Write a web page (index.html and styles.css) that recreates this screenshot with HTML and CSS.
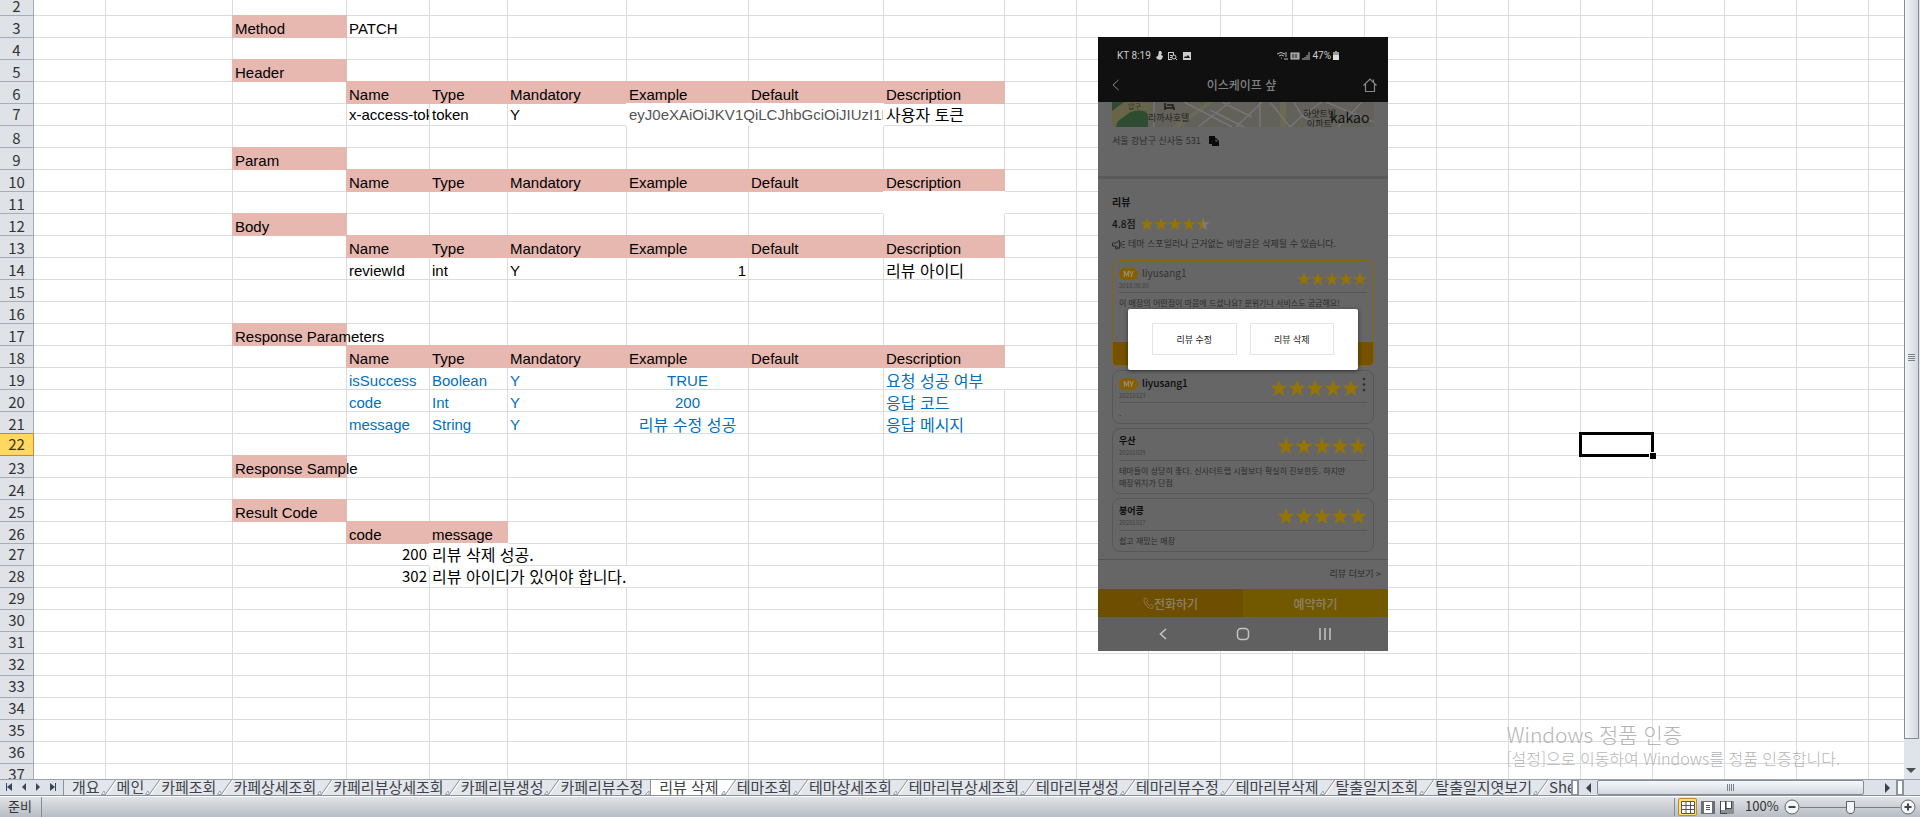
FILE: index.html
```html
<!DOCTYPE html>
<html lang="ko">

<head>
  <meta charset="utf-8">
  <title>리뷰 삭제</title>
  <link rel="stylesheet" href="styles.css">
</head>

<body>
  <!-- shared star shape -->
  <svg class="defs" aria-hidden="true">
    <symbol id="star" viewBox="0 0 20 20">
      <path d="M10 0.5l2.4 7h7.3l-5.9 4.4 2.2 7.2-6-4.4-6 4.4 2.2-7.2L0.3 7.5h7.3z"/>
    </symbol>
  </svg>

  <main id="main">
    <div id="sheet">
      <table id="grid"></table>

      <div id="phone">
        <div class="statusbar">
          <span>KT 8:19</span>
          <svg width="36" height="10" viewBox="0 0 36 10" fill="#ccc">
            <path d="M3 0h2l1 2-1 2 2 1-1 3-2 1-3-1-1-2 2-1zM12 1h6v3h-1v-2h-4v6h3v1h-4zM14 4h2v1h-2zM14 6h2v1h-2z"/>
            <circle cx="18" cy="6" r="2" fill="none" stroke="#ccc"/>
            <path d="M19 7l2 2" stroke="#ccc"/>
            <path d="M27 1h8v8h-8zM28 7h6l-2-3-2 2-1-1z" fill-rule="evenodd"/>
          </svg>
          <span class="right">
            <svg width="33" height="10" viewBox="0 0 33 10" fill="none" stroke="#bbb">
              <path d="M0 3q4-3 8 0M2 5q2-2 5 0M4 7h1M9 1v5M7 8h4"/>
              <rect x="14" y="2" width="8" height="6" fill="#999"/>
              <path d="M16 3v4M19 3v4" stroke="#222"/>
              <path d="M26 9V7M28 9V6M30 9V4M32 9V1"/>
            </svg>
            47%
            <svg width="6" height="9" viewBox="0 0 6 9"><path d="M2 0h2v1h2v8H0V1h2z" fill="#999"/><path d="M0 4h6v5H0z" fill="#ddd"/></svg>
          </span>
        </div>
        <div class="appbar">
          <svg width="8" height="12" viewBox="0 0 8 12" fill="none" stroke="#888"><path d="M6.500 1L1 6l5.500 5"/></svg>
          <b>이스케이프 샾</b>
          <svg width="14" height="14" viewBox="0 0 14 14" fill="none" stroke="#888" stroke-width="1.200"><path d="M.5 7.500L7 1l6.500 6.500M2.500 6v7.500h9V6M10.500 4V1.500"/></svg>
        </div>

        <svg class="map" viewBox="0 0 262 25" preserveAspectRatio="none">
          <rect width="262" height="25" fill="#62615a"/>
          <path d="M0 0h38v12L16 25H0z" fill="#66654a"/>
          <path d="M0 0h12L0 9zM4 25Q6 13 22 9q12-2 14 4v12z" fill="#2f4b31"/>
          <path d="M0 14L24 0h8L2 22z" fill="#6a6547"/>
          <path d="M168 0h6v25h-6zM60 25L96 0h5L68 25z" fill="#6c6a52"/>
          <path d="M42 0v25M72 0l48 25M86 25l32-25M98 8l34 17M110 0l30 15M124 25l26-25M148 0v25M158 0l20 25M182 0l8 14 20-14M178 25l12-11 20 11M214 0l48 20M226 25l24-25" fill="none" stroke="#75757a" stroke-width="1.500"/>
          <path d="M53 1v7M53 6h9v2M55 3h6v3" stroke="#1c1c1c" fill="none" stroke-width="1.500"/>
          <text x="16" y="7" class="map-road">압구</text>
          <text x="36" y="19" class="map-label">라까사호텔</text>
          <text x="191" y="15" class="map-label">하얏트빌</text>
          <text x="195" y="25" class="map-label">아파트</text>
          <text x="218" y="21" class="map-logo">kakao</text>
        </svg>
        <div class="address">
          서울 강남구 신사동 531
          <svg width="10" height="10" viewBox="0 0 10 10"><path d="M0 0h6v2H3v6H0zM3 2h4l3 3v5H3zM6.500 3v2.500H9z" fill="#0a0a0a" fill-rule="evenodd"/></svg>
        </div>

        <section class="reviews">
          <h2>리뷰</h2>
          <div class="score">
            4.8점
            <span class="stars mid">
              <svg><use href="#star"/></svg><svg><use href="#star"/></svg><svg><use href="#star"/></svg><svg><use href="#star"/></svg><svg viewBox="0 0 20 20"><path d="M10 .5l2.400 7h7.300l-5.900 4.400 2.200 7.200-6-4.400z" fill="#7c7c7c"/><path d="M10 .5L7.600 7.500H.3l5.900 4.400L4 19.100l6-4.400z"/></svg>
            </span>
          </div>
          <div class="notice">
            <svg width="13" height="11" viewBox="0 0 13 11" fill="none" stroke="#2c2c2c"><path d="M.5 4v3h3l4 2.500v-8L3.500 4zM3 7l1 3h1.500V8M9 3v5M10.500 2.500h2M10.500 5.500h2M10.500 8.500h2"/></svg>
            테마 스포일러나 근거없는 비방글은 삭제될 수 있습니다.
          </div>

          <article class="card mine">
            <header>
              <div><span class="badge">MY</span><span class="name thin">liyusang1</span><time>2018.00.00</time></div>
              <span class="stars small"><svg><use href="#star"/></svg><svg><use href="#star"/></svg><svg><use href="#star"/></svg><svg><use href="#star"/></svg><svg><use href="#star"/></svg></span>
            </header>
            <p>이 매장의 어떤점이 마음에 드셨나요? 분위기나 서비스도 궁금해요!</p>
            <div class="write"></div>
          </article>

          <article class="card">
            <header>
              <div><span class="badge">MY</span><span class="name">liyusang1</span><time>20210123</time></div>
              <span class="stars"><svg><use href="#star"/></svg><svg><use href="#star"/></svg><svg><use href="#star"/></svg><svg><use href="#star"/></svg><svg><use href="#star"/></svg></span>
              <svg class="more" width="4" height="15" viewBox="0 0 4 15" fill="#303030"><circle cx="2" cy="2" r="1.300"/><circle cx="2" cy="7.500" r="1.300"/><circle cx="2" cy="13" r="1.300"/></svg>
            </header>
            <p>.</p>
          </article>

          <article class="card">
            <header>
              <div><span class="name">우산</span><time>20201029</time></div>
              <span class="stars"><svg><use href="#star"/></svg><svg><use href="#star"/></svg><svg><use href="#star"/></svg><svg><use href="#star"/></svg><svg><use href="#star"/></svg></span>
            </header>
            <p>테마들이 상당히 좋다. 신사더트랩 시절보다 확실히 진보한듯. 하지만<br>매장위치가 단점</p>
          </article>

          <article class="card">
            <header>
              <div><span class="name">붕어콩</span><time>20201027</time></div>
              <span class="stars"><svg><use href="#star"/></svg><svg><use href="#star"/></svg><svg><use href="#star"/></svg><svg><use href="#star"/></svg><svg><use href="#star"/></svg></span>
            </header>
            <p>쉽고 재밌는 매장</p>
          </article>
        </section>

        <a class="more-link" href="#">리뷰 더보기 &gt;</a>
        <div class="actions">
          <button type="button"><svg width="11" height="12" viewBox="0 0 11 12" fill="none" stroke="#8c7a50"><path d="M2.500.8L1 2.200Q.5 6 3.500 9t6 2.300l1-1.800-2.500-2-1.500 1Q4 7 3.500 5l1.200-1.200z"/></svg>전화하기</button>
          <button type="button">예약하기</button>
        </div>
        <div class="navbar">
          <svg width="8" height="12" viewBox="0 0 8 12"><path d="M7 1L1.500 6 7 11"/></svg>
          <svg width="14" height="14" viewBox="0 0 14 14"><rect x="1.500" y="1.500" width="11" height="11" rx="3.500"/></svg>
          <svg width="12" height="12" viewBox="0 0 12 12"><path d="M1 0v12M6 0v12M11 0v12"/></svg>
        </div>

        <div class="dialog">
          <button type="button">리뷰 수정</button>
          <button type="button">리뷰 삭제</button>
        </div>
      </div>

      <div id="watermark">
        <div class="big">Windows 정품 인증</div>
        <div>[설정]으로 이동하여 Windows를 정품 인증합니다.</div>
      </div>
    </div>

    <div id="vscroll">
      <div class="thumb"><i></i></div>
      <svg width="14" height="40" viewBox="0 0 14 40"><path d="M2 29h10l-5 5z" fill="#4a4f57"/></svg>
    </div>
  </main>

  <div id="tabbar">
    <svg class="tabnav" width="63" height="15" viewBox="0 0 63 15" fill="#3c4654">
      <path d="M6 3h1v8H6zM12 3v8L7 7zM26 3v8l-4-4zM36 3v8l4-4zM50 3v8l5-4zM55 3h1v8h-1z"/>
    </svg>
    <nav id="tabs"></nav>
    <div class="split"></div>
    <div id="hscroll">
      <svg width="18" height="15" viewBox="0 0 18 15"><path d="M12 3v10L7 8z" fill="#3c4148"/></svg>
      <div class="thumb"><i></i></div>
      <svg width="32" height="15" viewBox="0 0 32 15"><path d="M21 3v10l5-5z" fill="#3c4148"/></svg>
    </div>
    <div class="split last"></div>
  </div>

  <footer id="status">
    <span class="ready">준비</span>
    <div class="views">
      <button type="button" class="on" aria-label="기본">
        <svg width="14" height="13" viewBox="0 0 14 13"><path d="M.5.5h13v12H.5z" fill="#fff" stroke="#555"/><path d="M0 4.500h14M0 8.500h14M5 0v13M9.500 0v13" stroke="#555"/></svg>
      </button>
      <button type="button" aria-label="페이지 레이아웃">
        <svg width="14" height="13" viewBox="0 0 14 13"><path d="M0 0h14v13H0z" fill="#6b6e73"/><path d="M3 1h8v11H3z" fill="#fff"/><path d="M5 4.500h4M5 6.500h4M5 8.500h4" stroke="#555"/></svg>
      </button>
      <button type="button" aria-label="페이지 나누기 미리 보기">
        <svg width="14" height="13" viewBox="0 0 14 13"><path d="M0 0h14v13H0z" fill="#8b8e93"/><path d="M1 1h4v8H1zM7 1h4v6H7z" fill="#fff"/><path d="M.5 0v12.500H7M5.500 0v9M11.500 0v7.500H6" stroke="#444" fill="none"/></svg>
      </button>
    </div>
    <label for="zoom">100%</label>
    <button type="button" class="round" aria-label="축소"><svg width="16" height="16" viewBox="0 0 16 16"><circle cx="8" cy="8" r="7" fill="#f4f5f7" stroke="#5d636b"/><path d="M4.500 8h7" stroke="#444" stroke-width="2"/></svg></button>
    <input type="range" id="zoom" min="0" max="100" value="50">
    <button type="button" class="round" aria-label="확대"><svg width="16" height="16" viewBox="0 0 16 16"><circle cx="8" cy="8" r="7" fill="#f4f5f7" stroke="#5d636b"/><path d="M4.500 8h7M8 4.500v7" stroke="#444" stroke-width="2"/></svg></button>
  </footer>

  <script>
    var FIRST_ROW = 2;
    var LAST_ROW = 60;
    var COLS = 'ABCDEFGHIJKLMNOPQRSTUVWXYZ';
    var SELECTED = 'R22';

    // rows whose cells are centred instead of sitting on the bottom line
    var midRows = [7, 22];

    // ref: [text, classes, colspan]
    var cells = {
      C3: ['Method', 'fill'],
      D3: ['PATCH'],
      C5: ['Header', 'fill'],
      D7: ['x-access-token', 'clip'],
      E7: ['token'],
      F7: ['Y'],
      G7: ['eyJ0eXAiOiJKV1QiLCJhbGciOiJIUzI1NiJ9', 'blank clip gray', 2],
      I7: ['사용자 토큰', 'ko'],
      C9: ['Param', 'fill'],
      I11: ['', 'blank'],
      C12: ['Body', 'fill'],
      D14: ['reviewId'],
      E14: ['int'],
      F14: ['Y'],
      G14: ['1', 'num'],
      I14: ['리뷰 아이디', 'ko'],
      C17: ['Response Parameters', 'fill'],
      D19: ['isSuccess', 'blue'],
      E19: ['Boolean', 'blue'],
      F19: ['Y', 'blue'],
      G19: ['TRUE', 'blue center'],
      I19: ['요청 성공 여부', 'blue ko', 2],
      D20: ['code', 'blue'],
      E20: ['Int', 'blue'],
      F20: ['Y', 'blue'],
      G20: ['200', 'blue center'],
      I20: ['응답 코드', 'blue ko'],
      D21: ['message', 'blue'],
      E21: ['String', 'blue'],
      F21: ['Y', 'blue'],
      G21: ['리뷰 수정 성공', 'blue center ko'],
      I21: ['응답 메시지', 'blue ko'],
      C23: ['Response Sample', 'fill'],
      C25: ['Result Code', 'fill'],
      D26: ['code', 'fill'],
      E26: ['message', 'fill'],
      D27: ['200', 'num ui'],
      E27: ['리뷰 삭제 성공.', 'blank ko'],
      D28: ['302', 'num ui'],
      E28: ['리뷰 아이디가 있어야 합니다.', 'ko', 3]
    };

    var heads = { D: 'Name', E: 'Type', F: 'Mandatory', G: 'Example', H: 'Default', I: 'Description' };
    [6, 10, 13, 18].forEach(function(row) {
      for (var col in heads) {
        cells[col + row] = [heads[col], 'fill'];
      }
    });

    var drawGrid = function() {
      var html = '<colgroup><col class="head">';
      for (var i = 0; i < COLS.length; i++) {
        html += '<col class="col-' + COLS[i].toLowerCase() + '">';
      }
      html += '</colgroup>';

      for (var r = FIRST_ROW; r <= LAST_ROW; r++) {
        var mid = midRows.indexOf(r) >= 0 || r > 26;
        html += '<tr' + (mid ? ' class="mid"' : '') + '><th' + (r === 22 ? ' class="current"' : '') + '>' + r + '</th>';
        for (var c = 0; c < COLS.length; c++) {
          var ref = COLS[c] + r;
          var cell = cells[ref] || ['', ''];
          var span = cell[2] || 1;
          var cls = (cell[1] || '') + (ref === SELECTED ? ' selected' : '');
          html += '<td' + (cls ? ' class="' + cls + '"' : '') + (span > 1 ? ' colspan="' + span + '"' : '') + '>' + cell[0] + '</td>';
          c += span - 1;
        }
        html += '</tr>';
      }

      document.getElementById('grid').innerHTML = html;
    };

    var tabs = ['개요', '메인', '카페조회', '카페상세조회', '카페리뷰상세조회', '카페리뷰생성', '카페리뷰수정', '리뷰 삭제', '테마조회', '테마상세조회', '테마리뷰상세조회', '테마리뷰생성', '테마리뷰수정', '테마리뷰삭제', '탈출일지조회', '탈출일지엿보기', 'Sheet1'];
    var activeTab = 7;

    var drawTabs = function() {
      var html = '';
      for (var i = 0; i < tabs.length; i++) {
        html += '<a href="#"' + (i === activeTab ? ' class="active"' : '') + '>' + tabs[i] + '</a>';
        if (i === activeTab - 1) {
          html += '<svg class="edge" width="8" height="15" viewBox="0 0 8 15"><path d="M2 15l4-4v4z" fill="#fff" stroke="#9aa0a8"/><path d="M7.500 0v15" stroke="#8b929c"/></svg>';
        } else if (i < tabs.length - 1) {
          html += '<svg class="edge" width="17" height="15" viewBox="0 0 17 15">' +
            (i === activeTab ? '<path d="M0 0h15L5 15H0z" fill="#fff"/>' : '') +
            '<path d="M5 15L15.500 0" stroke="#8b929c"/><path d="M6.500 15L17 0" stroke="#fff"/><path d="M1.500 14.500L4 11l1.500 3.500z" fill="#fff" stroke="#9aa0a8"/></svg>';
        }
      }
      document.getElementById('tabs').innerHTML = html;
    };

    drawGrid();
    drawTabs();
  </script>
</body>

</html>
```
FILE: styles.css
```css
* { box-sizing: border-box; }

body {
  margin: 0;
  height: 100vh;
  display: flex;
  flex-direction: column;
  overflow: hidden;
  background-color: white;
  color: black;
  font-family: "Noto Sans CJK KR", sans-serif;
}

button {
  margin: 0;
  padding: 0;
  border: 0;
  background: none;
  font-family: inherit;
}

svg { flex: none; }

.defs {
  position: absolute;
  width: 0;
  height: 0;
}

#main {
  flex: 1;
  min-height: 0;
  display: flex;
}

#sheet {
  flex: 1;
  min-width: 0;
  position: relative;
  overflow: hidden;
}

/* grid */

#grid {
  width: 2229px;
  table-layout: fixed;
  border-spacing: 0;
  font-family: "Liberation Sans", "Noto Sans CJK KR", sans-serif;
  font-size: 15px;
  line-height: 16px;
  margin-top: -6px;
}

#grid col { width: 72px; }

#grid .head { width: 34px; }

#grid .col-b { width: 127px; }

#grid .col-c { width: 114px; }

#grid .col-d { width: 83px; }

#grid .col-e { width: 78px; }

#grid .col-f { width: 119px; }

#grid .col-g { width: 122px; }

#grid .col-h { width: 135px; }

#grid .col-i { width: 121px; }

td, th {
  height: 22px;
  padding: 0 2px;
  border-right: 1px solid #dadcdd;
  border-bottom: 1px solid #dadcdd;
  vertical-align: bottom;
  white-space: nowrap;
}

th {
  padding: 0;
  background-color: #dfe3e8;
  border-color: #a4adb8;
  color: #333;
  font-family: "Noto Sans CJK KR", sans-serif;
  font-weight: normal;
  line-height: 18px;
  text-align: center;
}

.mid td, .mid th { vertical-align: middle; }

.mid th, .mid .ko, .mid .ui { padding-bottom: 2px; }

.current {
  background-color: #ffd860;
  border-color: #c58a2c;
  box-shadow: 0 -1px #c58a2c;
}

.fill {
  background-color: #e6b8b0;
  border-color: #e6b8b0;
  box-shadow: -1px 0 #e6b8b0, 0 -1px #e6b8b0, -1px -1px #e6b8b0;
}

.blank {
  background-color: white;
  border-color: white;
  box-shadow: -1px 0 white, 0 -1px white, -1px -1px white;
}

.clip { overflow: hidden; }

.gray { color: #555; }

.blue { color: #0070c0; }

.center { text-align: center; }

.num { text-align: right; }

.ko, .ui {
  font-family: "Noto Sans CJK KR", sans-serif;
  line-height: 18px;
}

.ko { font-size: 16px; }

.selected { position: relative; }

.selected::before {
  content: "";
  position: absolute;
  inset: -2px;
  border: 3px solid black;
}

.selected::after {
  content: "";
  position: absolute;
  right: -4px;
  bottom: -4px;
  width: 6px;
  height: 6px;
  background-color: black;
  border: solid white;
  border-width: 1px 0 0 1px;
}

/* phone picture placed on the sheet */

#phone {
  position: absolute;
  left: 1098px;
  top: 37px;
  width: 290px;
  background-color: #666;
  color: #2c2c2c;
  font-size: 9px;
  line-height: 12px;
}

.statusbar {
  height: 30px;
  padding: 7px 49px 0 19px;
  display: flex;
  align-items: center;
  gap: 5px;
  background-color: #101010;
  color: #ccc;
  font-family: Roboto, sans-serif;
  font-size: 10px;
}

.statusbar .right {
  margin-left: auto;
  display: flex;
  align-items: center;
  gap: 2px;
}

.appbar {
  height: 35px;
  padding: 0 11px 0 14px;
  display: flex;
  align-items: center;
  justify-content: space-between;
  background-color: #101010;
  color: #808080;
  font-size: 12px;
}

.appbar b { font-weight: 500; }

.map {
  display: block;
  width: 262px;
  height: 25px;
  margin: 0 14px;
}

.map-road { font-size: 7px; fill: #333; }

.map-label { font-size: 9px; fill: #222; }

.map-logo { font-size: 14px; fill: #111; }

.address {
  display: flex;
  align-items: center;
  gap: 8px;
  height: 52px;
  padding: 0 14px 22px;
  border-bottom: 3px solid #5a5a5a;
}

.reviews {
  padding: 16px 14px 7px;
  border-bottom: 1px solid #555;
}

.reviews h2 {
  margin: 0;
  color: #111;
  font-size: 10px;
  line-height: 14px;
}

.score {
  display: flex;
  align-items: center;
  gap: 4px;
  height: 29px;
  color: #111;
  font-size: 10px;
  font-weight: 500;
}

.stars {
  display: flex;
  fill: #967404;
}

.stars svg {
  width: 18px;
  height: 18px;
}

.stars.mid svg, .stars.small svg {
  width: 14px;
  height: 14px;
}

.notice {
  display: flex;
  align-items: center;
  gap: 3px;
  height: 12px;
  margin-bottom: 10px;
}

.card {
  margin-top: 4px;
  padding: 6px 6px 4px;
  border: 1px solid #575757;
  border-radius: 8px;
}

.card header {
  position: relative;
  display: flex;
  justify-content: space-between;
  height: 26px;
  border-bottom: 1px solid #565656;
}

.card .badge {
  display: inline-block;
  width: 19px;
  margin-right: 4px;
  border-radius: 6px;
  background-color: #865f00;
  color: #a0a0a0;
  font-size: 8px;
  text-align: center;
}

.card .name {
  color: #0c0c0c;
  font-weight: bold;
  font-size: 9px;
}

.card .badge + .name {
  font-size: 10px;
  font-weight: 500;
}

.card .badge + .thin {
  color: #333;
  font-weight: normal;
}

.card time {
  display: block;
  color: #3f3f3f;
  font-size: 6px;
}

.card .stars { margin-top: 2px; }

.card .more {
  position: absolute;
  right: 1px;
  top: 0;
}

.card .stars:not(:last-child) { margin-right: 7px; }

.card p {
  margin: 4px 0 0;
  font-size: 8px;
}

.card.mine {
  height: 106px;
  display: flex;
  flex-direction: column;
  padding-bottom: 0;
  border-color: #86640c;
  border-radius: 5px;
}

.card.mine .stars { margin-top: 5px; }

.card .write {
  height: 23px;
  margin: auto -6px 0;
  background-color: #745200;
  border-radius: 0 0 4px 4px;
}

.more-link {
  display: block;
  padding: 8px 7px 9px;
  color: #2c2c2c;
  text-align: right;
  text-decoration: none;
}

.actions {
  display: flex;
  height: 28px;
}

.actions button {
  flex: 1;
  display: flex;
  align-items: center;
  justify-content: center;
  background-color: #6e4e00;
  color: #8c8168;
  font-size: 12px;
  font-weight: 500;
}

.actions button + button { background-color: #725900; }

.navbar {
  display: flex;
  align-items: center;
  justify-content: space-between;
  height: 34px;
  padding: 0 57px 0 61px;
  background-color: #606060;
  fill: none;
  stroke: #c4c4c4;
  stroke-width: 1.5;
}

.dialog {
  position: absolute;
  left: 30px;
  top: 272px;
  width: 230px;
  padding: 14px 24px 15px;
  display: flex;
  gap: 13px;
  background-color: white;
  border-radius: 2px;
  box-shadow: 0 1px 4px rgba(0, 0, 0, 0.5);
}

.dialog button {
  flex: 1;
  height: 32px;
  border: 1px solid #e4e4e4;
  color: #222;
  font-size: 9px;
}

#watermark {
  position: absolute;
  right: 64px;
  bottom: 9px;
  color: #b5b5b5;
  font-size: 16px;
  font-weight: 300;
  line-height: 24px;
}

#watermark .big { font-size: 21px; }

/* scrollbars */

#vscroll {
  width: 16px;
  display: flex;
  flex-direction: column;
  background-color: #dfe3ea;
}

#vscroll .thumb {
  flex: 1;
  display: flex;
  align-items: center;
  justify-content: center;
  width: 15px;
  border: 1px solid #858c97;
  border-top: 0;
  background: linear-gradient(to right, #f3f6f9, #d3d8df);
}

#vscroll .thumb i {
  width: 7px;
  height: 7px;
  margin-bottom: 24px;
  background: repeating-linear-gradient(#7a818c 0 1px, transparent 1px 2px);
}

#tabbar {
  display: flex;
  height: 17px;
  border-top: 1px solid #9da2a8;
  border-bottom: 1px solid #8a92a0;
  background-color: #dce1ea;
}

#tabs {
  flex: 1;
  min-width: 0;
  display: flex;
  overflow: hidden;
  padding-left: 8px;
  border-left: 1px solid #8b929c;
  background-color: #e3e6ea;
}

#tabs a {
  flex: none;
  color: #3d424a;
  font-size: 15px;
  line-height: 14px;
  text-decoration: none;
  white-space: nowrap;
}

#tabs .active {
  padding: 0 1px 0 8px;
  background-color: white;
}

.split {
  width: 8px;
  border: 2px solid #8b929c;
  border-width: 1px 2px;
  background-color: white;
}

.split.last { margin-right: 16px; }

#hscroll {
  display: flex;
  width: 317px;
}

#hscroll .thumb {
  flex: 1;
  display: flex;
  align-items: center;
  justify-content: center;
  border: 1px solid #858c97;
  border-radius: 2px;
  background: linear-gradient(#f6f8fa, #d3d8df);
}

#hscroll .thumb i {
  width: 8px;
  height: 7px;
  background: repeating-linear-gradient(to right, #7a818c 0 1px, transparent 1px 2px);
}

/* status bar */

#status {
  display: flex;
  align-items: center;
  height: 21px;
  padding: 0 4px 0 8px;
  border-top: 1px solid white;
  background: linear-gradient(#e0e3e7, #b8bdc4);
  color: #333;
  font-size: 13px;
  line-height: 18px;
}

.ready {
  width: 34px;
  padding-bottom: 2px;
  border-right: 1px solid #858b94;
}

.views {
  margin-left: auto;
  display: flex;
  align-items: center;
  gap: 2px;
  padding: 0 10px 0 3px;
  border-left: 1px solid #858b94;
}

.views button {
  display: flex;
  align-items: center;
  justify-content: center;
  width: 17px;
  height: 18px;
}

.views .on {
  width: 19px;
  border: 1px solid #c08a2a;
  border-radius: 2px;
  background-color: #ffe07a;
}

#status label {
  width: 39px;
  padding-bottom: 2px;
}

.round {
  display: flex;
  width: 16px;
  height: 16px;
}

#zoom {
  appearance: none;
  width: 100px;
  height: 16px;
  margin: 0;
  background: linear-gradient(#777d86, #777d86) center / 100% 1px no-repeat;
}

#zoom::-webkit-slider-thumb {
  appearance: none;
  width: 9px;
  height: 13px;
  border: 1px solid #5d636b;
  border-radius: 1px 1px 5px 5px;
  background-color: #f4f5f7;
}
```
